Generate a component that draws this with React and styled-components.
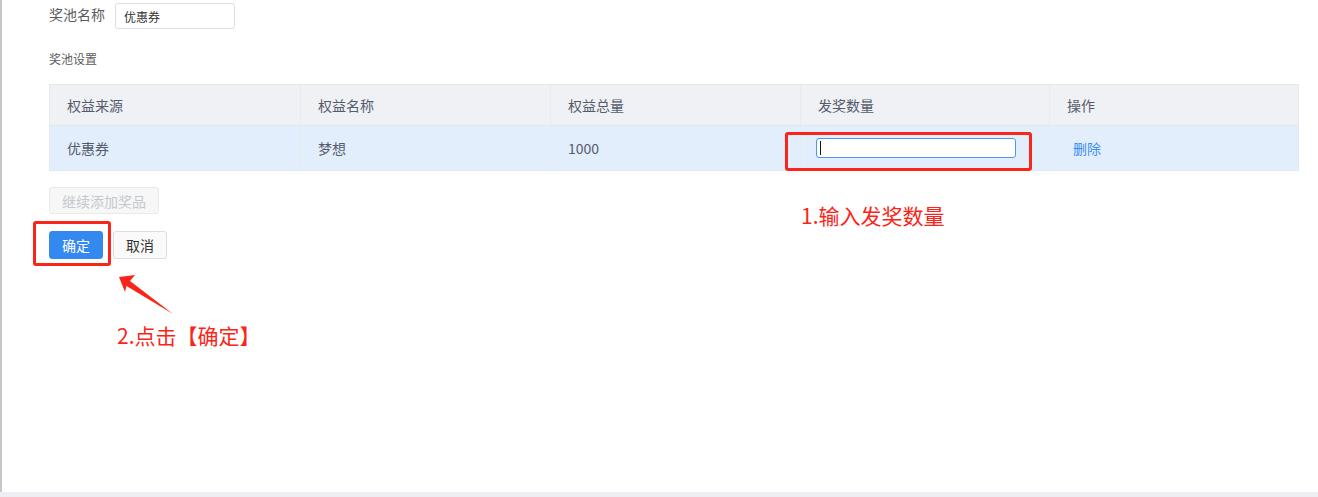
import React from "react";
import styled, { createGlobalStyle } from "styled-components";

const Global = createGlobalStyle`
  html, body { margin: 0; padding: 0; background: #fff; }
  body { font-family: "Noto Sans CJK SC", "Noto Sans", "Liberation Sans", sans-serif; }
  * { box-sizing: border-box; }
`;

const Page = styled.div`
  position: relative;
  width: 1318px;
  height: 497px;
  display: flex;
  flex-direction: column;
  background: #fff;
  overflow: hidden;
`;

const Main = styled.div`
  flex: 1;
  border-left: 2px solid #c6c7c9;
  padding-left: 47px;
  display: flex;
  flex-direction: column;
`;

const BottomBand = styled.div`
  height: 5px;
  background: #eceef2;
`;

const NameRow = styled.div`
  margin-top: 3px;
  display: flex;
  align-items: center;
  gap: 10px;
  height: 26px;
`;

const Label = styled.span`
  font-size: 14px;
  color: #5c5c5c;
  line-height: 20px;
  margin-top: -4px;
`;

const TextBox = styled.div`
  width: 120px;
  height: 26px;
  border: 1px solid #dcdee2;
  border-radius: 3px;
  padding-left: 8px;
  display: flex;
  align-items: center;
  font-size: 12px;
  color: #333;
`;

const SectionTitle = styled.div`
  margin-top: 21px;
  font-size: 12px;
  line-height: 18px;
  color: #5c5c5c;
`;

const Table = styled.div`
  margin-top: 16px;
  width: 1250px;
  border: 1px solid #e6e8eb;
  display: flex;
  flex-direction: column;
`;

const Row = styled.div`
  display: grid;
  grid-template-columns: 250px 250px 250px 249px 249px;
  height: ${(p) => (p.$head ? "40px" : "45px")};
  background: ${(p) => (p.$head ? "#f0f1f4" : "#e3eefc")};
  border-top: ${(p) => (p.$head ? "none" : "1px solid #e3e6ea")};
`;

const Cell = styled.div`
  display: flex;
  align-items: center;
  font-size: 14px;
  color: ${(p) => (p.$link ? "#3a8ef0" : "#555b6b")};
  border-left: ${(p) => (p.$first ? "none" : "1px solid #e8eaee")};
  padding-left: ${(p) => (p.$pad ? p.$pad : "17px")};
`;

const NumInput = styled.div`
  position: relative;
  width: 200px;
  height: 20px;
  background: #fff;
  border: 1px solid #4f97ec;
  border-radius: 3px;
`;

const Caret = styled.span`
  position: absolute;
  left: 3px;
  top: 2px;
  width: 1px;
  height: 14px;
  background: #111;
`;

const GhostButton = styled.div`
  margin-top: 16px;
  width: 110px;
  height: 27px;
  border: 1px solid #e9eaec;
  background: #f7f7f7;
  border-radius: 3px;
  color: #c5c8ce;
  font-size: 14px;
  display: flex;
  align-items: center;
  justify-content: center;
`;

const Actions = styled.div`
  margin-top: 17px;
  display: flex;
  gap: 10px;
`;

const Button = styled.div`
  width: 54px;
  height: 28px;
  border-radius: 3px;
  font-size: 14px;
  display: flex;
  align-items: center;
  justify-content: center;
  background: ${(p) => (p.$primary ? "#3489f0" : "#fafafa")};
  color: ${(p) => (p.$primary ? "#fff" : "#333")};
  border: 1px solid ${(p) => (p.$primary ? "#3489f0" : "#dcdee2")};
`;

const Highlight = styled.div`
  position: absolute;
  left: ${(p) => p.$x}px;
  top: ${(p) => p.$y}px;
  width: ${(p) => p.$w}px;
  height: ${(p) => p.$h}px;
  border: 3px solid #fb2418;
  border-radius: 3px;
  pointer-events: none;
`;

const Note = styled.div`
  position: absolute;
  left: ${(p) => p.$x}px;
  top: ${(p) => p.$y}px;
  font-size: 21px;
  line-height: 24px;
  color: #fb2418;
  white-space: nowrap;
`;

const ArrowSvg = styled.svg`
  position: absolute;
  left: 110px;
  top: 266px;
`;

export default function App() {
  return (
    <>
      <Global />
      <Page>
        <Main>
          <NameRow>
            <Label>奖池名称</Label>
            <TextBox>优惠券</TextBox>
          </NameRow>
          <SectionTitle>奖池设置</SectionTitle>
          <Table>
            <Row $head>
              <Cell $first>权益来源</Cell>
              <Cell>权益名称</Cell>
              <Cell>权益总量</Cell>
              <Cell>发奖数量</Cell>
              <Cell>操作</Cell>
            </Row>
            <Row>
              <Cell $first>优惠券</Cell>
              <Cell>梦想</Cell>
              <Cell>1000</Cell>
              <Cell $pad="15px">
                <NumInput>
                  <Caret />
                </NumInput>
              </Cell>
              <Cell $link $pad="23px">删除</Cell>
            </Row>
          </Table>
          <GhostButton>继续添加奖品</GhostButton>
          <Actions>
            <Button $primary>确定</Button>
            <Button>取消</Button>
          </Actions>
        </Main>
        <BottomBand />

        <Highlight $x={785} $y={132} $w={247} $h={39} />
        <Highlight $x={33} $y={221} $w={78} $h={45} />
        <Note $x={801} $y={203}>1.输入发奖数量</Note>
        <Note $x={117} $y={323}>2.点击【确定】</Note>
        <ArrowSvg width="70" height="54" viewBox="110 266 70 54">
          <polygon
            points="119,277 135,275 130,281 173,314 126.5,286 125,292"
            fill="#fb2418"
          />
        </ArrowSvg>
      </Page>
    </>
  );
}
